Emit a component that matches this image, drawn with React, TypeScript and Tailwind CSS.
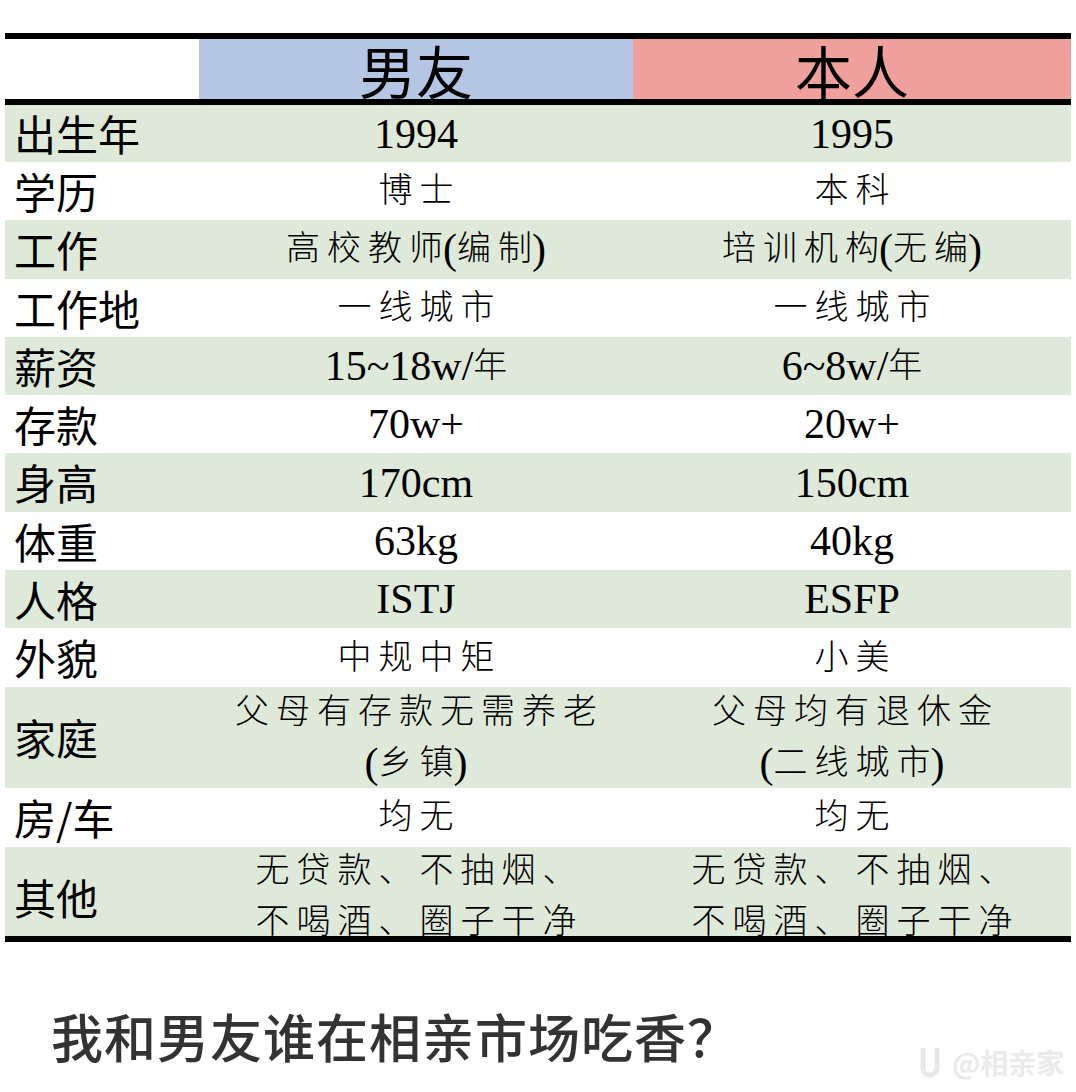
import React from 'react'

type Row = {
  label: string
  a: string[]
  b: string[]
  green: boolean
  h: string
  pad?: string
}

const rows: Row[] = [
  { label: '出生年', a: ['1994'], b: ['1995'], green: true, h: 'h-[57px]' },
  { label: '学历', a: ['博士'], b: ['本科'], green: false, h: 'h-[58.3px]' },
  { label: '工作', a: ['高校教师(编制)'], b: ['培训机构(无编)'], green: true, h: 'h-[58.3px]' },
  { label: '工作地', a: ['一线城市'], b: ['一线城市'], green: false, h: 'h-[58.3px]' },
  { label: '薪资', a: ['15~18w/年'], b: ['6~8w/年'], green: true, h: 'h-[58.3px]' },
  { label: '存款', a: ['70w+'], b: ['20w+'], green: false, h: 'h-[58.3px]' },
  { label: '身高', a: ['170cm'], b: ['150cm'], green: true, h: 'h-[58.3px]' },
  { label: '体重', a: ['63kg'], b: ['40kg'], green: false, h: 'h-[58.3px]' },
  { label: '人格', a: ['ISTJ'], b: ['ESFP'], green: true, h: 'h-[58.3px]' },
  { label: '外貌', a: ['中规中矩'], b: ['小美'], green: false, h: 'h-[58.3px]' },
  {
    label: '家庭',
    a: ['父母有存款无需养老', '(乡镇)'],
    b: ['父母均有退休金', '(二线城市)'],
    green: true,
    h: 'h-[101px]',
  },
  { label: '房/车', a: ['均无'], b: ['均无'], green: false, h: 'h-[59px]' },
  {
    label: '其他',
    a: ['无贷款、不抽烟、', '不喝酒、圈子干净'],
    b: ['无贷款、不抽烟、', '不喝酒、圈子干净'],
    green: true,
    // the second line runs under the bottom rule in the original
    h: 'h-[89px] overflow-hidden',
    pad: 'justify-start -mt-[1px]',
  },
]

const cjk = /[\u4e00-\u9fff\u3001]/

// spread out the chinese parts, keep latin tight
function Line({ text }: { text: string }) {
  const parts = text.split(/([\u4e00-\u9fff\u3001]+)/).filter(Boolean)
  return (
    <div className="h-[51px] flex items-center justify-center leading-none whitespace-nowrap">
      {parts.map((p, i) =>
        cjk.test(p) ? (
          <span key={i} className="text-[34px] font-light">
            <span className="tracking-[7px]">{p.slice(0, -1)}</span>
            {p.slice(-1)}
          </span>
        ) : (
          <span key={i} className="text-[42px]">
            {p}
          </span>
        )
      )}
    </div>
  )
}

function Cell({ lines, extra }: { lines: string[]; extra?: string }) {
  return (
    <div
      className={`flex flex-col items-center ${extra ?? 'justify-center'} text-black font-['Liberation_Serif','Noto_Sans_CJK_SC',serif]`}
    >
      {lines.map((l, i) => (
        <Line key={i} text={l} />
      ))}
    </div>
  )
}

export default function App() {
  return (
    <div className="relative w-full h-[1092px] bg-white overflow-hidden pt-[33px] font-['Noto_Sans_CJK_SC',sans-serif]">
      <div className="ml-[5px] w-[1066px] border-t-[6px] border-b-[6px] border-black">
        {/* header */}
        <div className="grid grid-cols-[194px_434px_438px] h-[66px] border-b-[6px] border-black">
          <div className="bg-white" />
          <div className="bg-[#b4c6e4] flex items-center justify-center pt-[1px]">
            <span className="text-[57px] leading-none text-black">男友</span>
          </div>
          <div className="bg-[#f0a09c] flex items-center justify-center pt-[1px]">
            <span className="text-[57px] leading-none text-black">本人</span>
          </div>
        </div>

        {rows.map((r) => (
          <div
            key={r.label}
            className={`grid grid-cols-[194px_434px_438px] ${r.h} ${
              r.green ? 'bg-[#dfe9d9]' : 'bg-white'
            }`}
          >
            <div className="flex items-center pl-[9px] text-[42px] leading-[1.2] text-black">
              {r.label}
            </div>
            <Cell lines={r.a} extra={r.pad} />
            <Cell lines={r.b} extra={r.pad} />
          </div>
        ))}
      </div>

      <div className="mt-[68px] pl-[51px] text-[52px] leading-none font-medium text-[#333333] tracking-[1px]">
        我和男友谁在相亲市场吃香？
      </div>

      {/* faded watermark */}
      <div className="absolute left-[920px] top-[1046px] flex items-center gap-[12px] whitespace-nowrap text-[#ebebeb]">
        <svg width="20" height="32" viewBox="0 0 20 32">
          <path d="M3 2 V22 a7 7 0 0 0 14 0 V2" fill="none" stroke="#e8e8e8" strokeWidth="5" />
        </svg>
        <span className="text-[28px] leading-none font-bold">@相亲家</span>
      </div>
    </div>
  )
}
